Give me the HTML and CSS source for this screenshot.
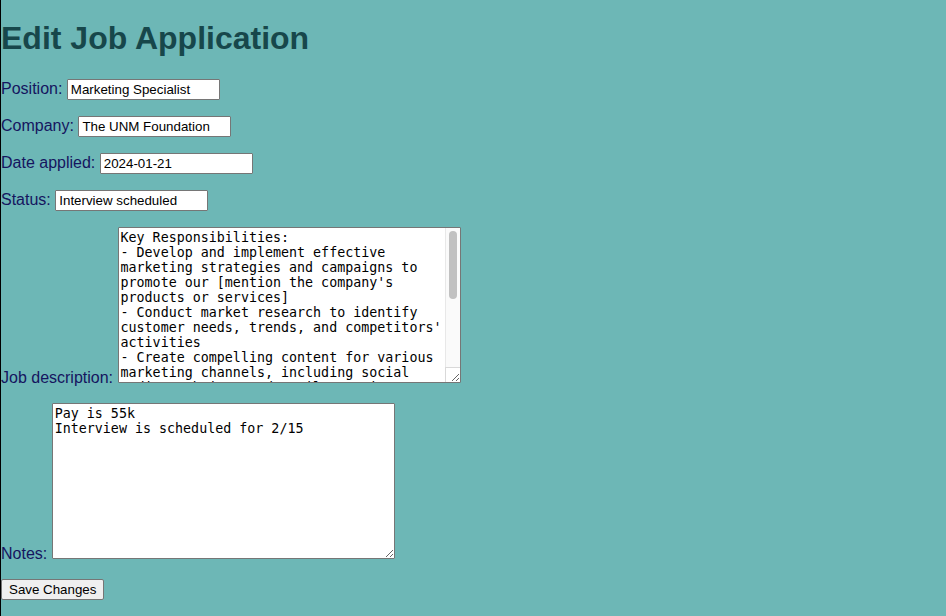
FILE: index.html
```html
<!DOCTYPE html>
<html lang="en">
<head>
<meta charset="utf-8">
<title>Edit Job Application</title>
<link rel="stylesheet" href="styles.css">
</head>
<body>
<main class="page">
<h1 class="title">Edit Job Application</h1>
<form class="form">
<div class="field"><label for="position">Position:</label> <input class="text" id="position" type="text" value="Marketing Specialist"></div>
<div class="field"><label for="company">Company:</label> <input class="text" id="company" type="text" value="The UNM Foundation"></div>
<div class="field"><label for="date">Date applied:</label> <input class="text" id="date" type="text" value="2024-01-21"></div>
<div class="field"><label for="status">Status:</label> <input class="text" id="status" type="text" value="Interview scheduled"></div>
<div class="field"><label for="description">Job description:</label> <span class="scroller"><textarea class="area area-long" id="description">Key Responsibilities:
- Develop and implement effective marketing strategies and campaigns to promote our [mention the company's products or services]
- Conduct market research to identify customer needs, trends, and competitors' activities
- Create compelling content for various marketing channels, including social media, website, and email campaigns
- Manage and optimize digital marketing campaigns
- Collaborate with internal teams to develop marketing materials
- Monitor and report on the performance of marketing initiatives
- Stay up to date with industry trends and best practices

Requirements:
- Bachelor's degree in marketing or a related field
- Proven experience in a marketing role
- Strong written and verbal communication skills</textarea><span class="track"><span class="thumb"></span></span><span class="corner"></span></span></div>
<div class="field"><label for="notes">Notes:</label> <textarea class="area" id="notes">Pay is 55k
Interview is scheduled for 2/15</textarea></div>
<button class="save" type="submit">Save Changes</button>
</form>
</main>
</body>
</html>
```

FILE: styles.css
```css
* { box-sizing: border-box; }
body {
  margin: 0;
  min-height: 100vh;
  background: #6db7b6;
  border-left: 1px solid #000;
  color: #15155f;
  font: 16px/18px "Liberation Sans", Arial, sans-serif;
}
.page { padding-top: 20px; }
.title {
  margin: 0 0 22px;
  color: #17474b;
  font-size: 32px;
  line-height: 37px;
}
.form {
  display: flex;
  flex-direction: column;
  align-items: flex-start;
  gap: 16px;
}
.text {
  width: 153px;
  height: 21px;
  padding: 1px 3px;
  border: 1px solid #767676;
  border-radius: 1px;
  background: #fff;
  color: #000;
  font-family: "Liberation Sans", Arial, sans-serif;
}
.area {
  width: 343px;
  height: 156px;
  padding: 2px;
  border: 1px solid #767676;
  border-radius: 1px;
  background: #fff;
  color: #000;
  font-family: "DejaVu Sans Mono", monospace;
  line-height: 15px;
  resize: both;
  vertical-align: baseline;
}
.area-long { padding-right: 16px; }
.scroller {
  display: inline-block;
  position: relative;
}
/* scrollbar over the right edge of the long text box */
.track {
  position: absolute;
  top: 1px;
  right: 1px;
  bottom: 20px;
  width: 15px;
  padding: 3px 2px 0 3px;
  border-left: 1px solid #e8e8e8;
  background: #fafafa;
  pointer-events: none;
}
.thumb {
  display: block;
  width: 8px;
  height: 68px;
  border-radius: 4px;
  background: #c1c1c1;
}
.corner {
  position: absolute;
  right: 1px;
  bottom: 5px;
  width: 15px;
  height: 15px;
  border: 1px solid #d9d9d9;
  border-width: 1px 0 0 1px;
  pointer-events: none;
}
.save {
  height: 21px;
  padding: 1px 7px;
  border: 1px solid #767676;
  border-radius: 2px;
  background: #efefef;
  color: #000;
  font-family: "Liberation Sans", Arial, sans-serif;
}
```
